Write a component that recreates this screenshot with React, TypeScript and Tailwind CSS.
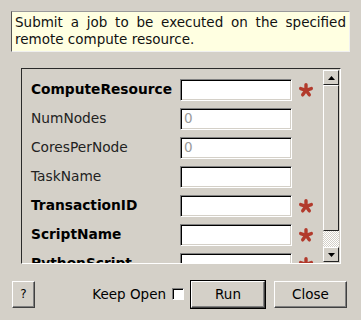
import React from "react";

const rows: { label: string; bold: boolean; placeholder?: string; req: boolean }[] = [
  { label: "ComputeResource", bold: true, req: true },
  { label: "NumNodes", bold: false, placeholder: "0", req: false },
  { label: "CoresPerNode", bold: false, placeholder: "0", req: false },
  { label: "TaskName", bold: false, req: false },
  { label: "TransactionID", bold: true, req: true },
  { label: "ScriptName", bold: true, req: true },
  { label: "PythonScript", bold: true, req: true },
];

function Star() {
  const arms = [-90, -18, 54, 126, 198];
  return (
    <svg width="16" height="16" viewBox="0 0 16 16" className="block">
      {arms.map((a) => {
        const r = (a * Math.PI) / 180;
        return (
          <line
            key={a}
            x1={8}
            y1={8.3}
            x2={8 + Math.cos(r) * 5.6}
            y2={8.3 + Math.sin(r) * 5.6}
            stroke="#b23a2c"
            strokeWidth={3.4}
            strokeLinecap="round"
          />
        );
      })}
    </svg>
  );
}

function Arrow({ up }: { up: boolean }) {
  return (
    <svg width="7" height="4" viewBox="0 0 7 4" className="block">
      {up ? <polygon points="0,4 7,4 3.5,0" fill="#000" /> : <polygon points="0,0 7,0 3.5,4" fill="#000" />}
    </svg>
  );
}

export default function App() {
  return (
    <div
      className="w-[361px] h-[320px] bg-[#d4d0c8] relative overflow-hidden flex flex-col"
      style={{ fontFamily: '"DejaVu Sans", sans-serif' }}
    >
      <div className="ml-[11px] mt-[11px] w-[339px] h-[41px] bg-[#ffffe1] border border-t-[#9a9a9a] border-l-[#555] border-b-[#f0f0f0] border-r-[#f0f0f0] px-[3px] pt-[2px] text-[13.5px] leading-[17px] text-[#111] text-justify">
        Submit a job to be executed on the specified remote compute resource.
      </div>

      <div className="ml-[21px] mt-[16px] w-[320px] h-[196px] border border-t-[#2a2a2a] border-l-[#2a2a2a] border-b-white border-r-white flex">
        <div className="flex-1 overflow-hidden pt-[6px] pl-[9px]">
          {rows.map((r) => (
            <div key={r.label} className="h-[29px] flex items-center">
              <div
                className={`w-[149px] text-[13.75px] whitespace-nowrap ${r.bold ? "font-bold text-black" : "text-[#222]"}`}
              >
                {r.label}
              </div>
              <div className="w-[112px] h-[22px] bg-white border border-t-[#808080] border-l-[#808080] border-b-white border-r-white shadow-[inset_1px_1px_0_#000,inset_-1px_-1px_0_#d4d0c8] flex items-center pl-[3px] text-[13.5px] text-[#9a9a9a]">
                {r.placeholder ?? ""}
              </div>
              <div className="ml-[6px] w-[16px] h-[16px]">{r.req ? <Star /> : null}</div>
            </div>
          ))}
        </div>
        <div className="w-[16px] mr-[1px] mt-[1px] mb-[1px] flex flex-col">
          <div className="h-[15px] bg-[#d4d0c8] border border-t-white border-l-white border-b-[#222] border-r-[#222] flex items-center justify-center">
            <Arrow up />
          </div>
          <div className="h-[146px] bg-[#d4d0c8] border border-t-white border-l-white border-b-[#222] border-r-[#222]" />
          <div
            className="flex-1"
            style={{
              backgroundColor: "#d4d0c8",
              backgroundImage:
                "repeating-conic-gradient(#ffffff 0% 25%, #d4d0c8 0% 50%)",
              backgroundSize: "2px 2px",
            }}
          />
          <div className="h-[15px] bg-[#d4d0c8] border border-t-white border-l-white border-b-[#222] border-r-[#222] flex items-center justify-center">
            <Arrow up={false} />
          </div>
        </div>
      </div>

      <div className="mt-[16px] pl-[12px] pr-[14px] flex items-center h-[28px] text-[13.5px] text-black">
        <div className="w-[23px] h-[27px] border border-t-white border-l-white border-b-[#404040] border-r-[#404040] shadow-[inset_-1px_-1px_0_#808080] flex items-center justify-center text-[12px]">
          ?
        </div>
        <div className="flex-1" />
        <span className="mr-[6px]">Keep Open</span>
        <div className="w-[12px] h-[12px] bg-white border border-t-[#808080] border-l-[#808080] border-b-white border-r-white shadow-[inset_1px_1px_0_#000] mr-[6px]" />
        <div className="w-[76px] h-[29px] border border-black flex">
          <div className="flex-1 border border-t-white border-l-white border-b-[#404040] border-r-[#404040] shadow-[inset_-1px_-1px_0_#808080] flex items-center justify-center">
            Run
          </div>
        </div>
        <div className="ml-[8px] w-[73px] h-[27px] border border-t-white border-l-white border-b-[#404040] border-r-[#404040] shadow-[inset_-1px_-1px_0_#808080] flex items-center justify-center">
          Close
        </div>
      </div>
    </div>
  );
}
